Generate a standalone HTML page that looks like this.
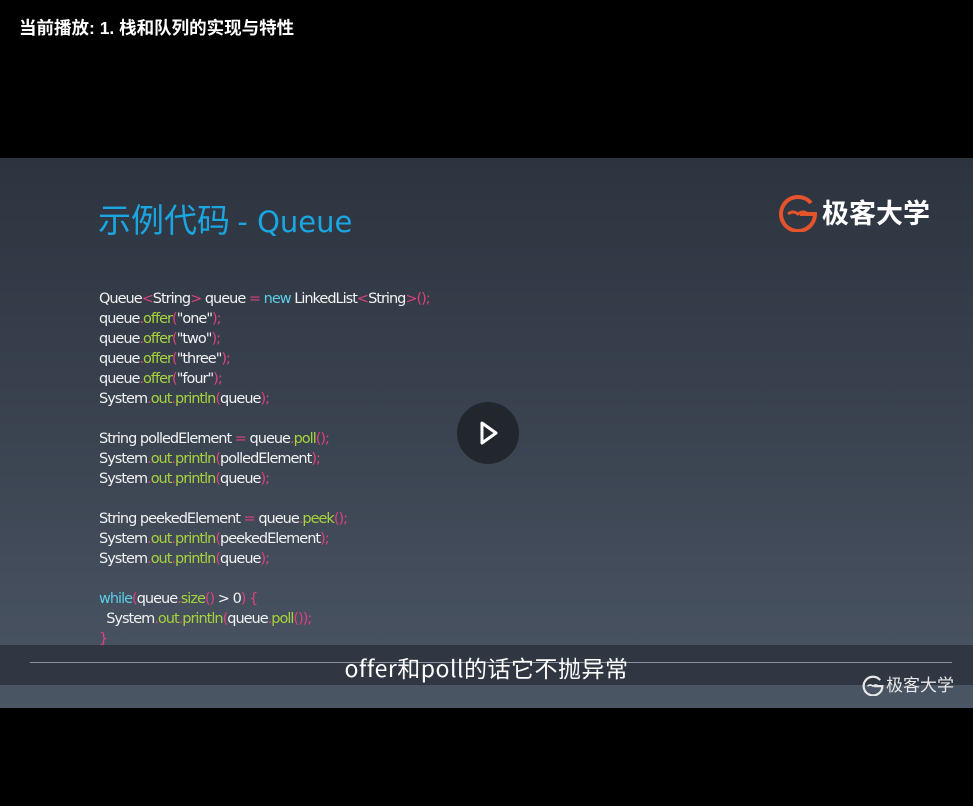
<!DOCTYPE html>
<html><head><meta charset="utf-8"><style>
body{margin:0;width:973px;height:806px;background:#000;position:relative;overflow:hidden;font-family:"Liberation Sans","Noto Sans CJK SC",sans-serif}
.top{position:absolute;left:19px;top:15px;color:#fff;font-size:17.5px;font-weight:bold}
.vid{position:absolute;left:0;top:158px;width:973px;height:550px;background:linear-gradient(#2d3440,#3a4350 50%,#4b5665)}
.title{position:absolute;left:98px;top:194px;font-size:33px;color:#1aa6e0;font-family:"Noto Sans CJK SC",sans-serif}
.code{position:absolute;left:99px;top:289px;font-size:14.5px;line-height:20px;color:#f2f2f2;font-family:"DejaVu Sans","Noto Sans CJK SC",sans-serif;letter-spacing:-1px;white-space:pre}
.p{color:#e0407c}.g{color:#a8d23c}.c{color:#5ccde6}
.band{position:absolute;left:0;top:645px;width:973px;height:40px;background:rgba(40,46,56,0.75)}
.line{position:absolute;left:30px;top:662px;width:922px;height:1px;background:#8a929c}
.sub{position:absolute;left:0;width:973px;text-align:center;top:650px;color:#fff;font-size:23px;letter-spacing:0.5px;font-family:"Noto Sans CJK SC",sans-serif}
.play{position:absolute;left:457px;top:402px;width:62px;height:62px;border-radius:50%;background:rgba(30,34,40,0.85)}
.logo{position:absolute;left:778px;top:192px;color:#fff;font-size:27px;font-family:"Noto Sans CJK SC",sans-serif;font-weight:bold}
.wm{position:absolute;left:862px;top:671px;color:#e8e8e8;font-size:17px;font-family:"Noto Sans CJK SC",sans-serif}
</style></head><body>
<div class="top">当前播放: 1. 栈和队列的实现与特性</div>
<div class="vid"></div>
<div class="title">示例代码 <span style="font-family:'DejaVu Sans',sans-serif;font-size:29px">- Queue</span></div>
<div class="logo"><svg width="40" height="40" viewBox="0 0 40 40" style="vertical-align:-9px;margin-right:4px"><path d="M33 11A17 17 0 1 0 37 22H22" fill="none" stroke="#e5532c" stroke-width="4"/><path d="M10 22q5-4 10 0q5-4 10 0" fill="none" stroke="#e5532c" stroke-width="3"/></svg>极客大学</div>
<div class="code">Queue<span class="p">&lt;</span>String<span class="p">&gt;</span> queue <span class="p">=</span> <span class="c">new</span> LinkedList<span class="p">&lt;</span>String<span class="p">&gt;();</span>
queue<span class="p">.</span><span class="g">offer</span><span class="p">(</span>"one"<span class="p">);</span>
queue<span class="p">.</span><span class="g">offer</span><span class="p">(</span>"two"<span class="p">);</span>
queue<span class="p">.</span><span class="g">offer</span><span class="p">(</span>"three"<span class="p">);</span>
queue<span class="p">.</span><span class="g">offer</span><span class="p">(</span>"four"<span class="p">);</span>
System<span class="p">.</span><span class="g">out</span><span class="p">.</span><span class="g">println</span><span class="p">(</span>queue<span class="p">);</span>

String polledElement <span class="p">=</span> queue<span class="p">.</span><span class="g">poll</span><span class="p">();</span>
System<span class="p">.</span><span class="g">out</span><span class="p">.</span><span class="g">println</span><span class="p">(</span>polledElement<span class="p">);</span>
System<span class="p">.</span><span class="g">out</span><span class="p">.</span><span class="g">println</span><span class="p">(</span>queue<span class="p">);</span>

String peekedElement <span class="p">=</span> queue<span class="p">.</span><span class="g">peek</span><span class="p">();</span>
System<span class="p">.</span><span class="g">out</span><span class="p">.</span><span class="g">println</span><span class="p">(</span>peekedElement<span class="p">);</span>
System<span class="p">.</span><span class="g">out</span><span class="p">.</span><span class="g">println</span><span class="p">(</span>queue<span class="p">);</span>

<span class="c">while</span><span class="p">(</span>queue<span class="p">.</span><span class="g">size</span><span class="p">()</span> &gt; 0<span class="p">)</span> <span class="p">{</span>
  System<span class="p">.</span><span class="g">out</span><span class="p">.</span><span class="g">println</span><span class="p">(</span>queue<span class="p">.</span><span class="g">poll</span><span class="p">());</span>
<span class="p">}</span></div>
<div class="band"></div>
<div class="line"></div>
<div class="sub">offer和poll的话它不抛异常</div>
<div class="wm"><svg width="22" height="22" viewBox="0 0 40 40" style="vertical-align:-5px;margin-right:2px"><path d="M33 11A17 17 0 1 0 37 22H22" fill="none" stroke="#e8e8e8" stroke-width="4"/><path d="M10 22q5-4 10 0q5-4 10 0" fill="none" stroke="#e8e8e8" stroke-width="3"/></svg>极客大学</div>
<div class="play"><svg width="62" height="62" viewBox="0 0 62 62"><path d="M25 21L39 31L25 41Z" fill="none" stroke="#fff" stroke-width="3" stroke-linejoin="round"/></svg></div>
</body></html>
